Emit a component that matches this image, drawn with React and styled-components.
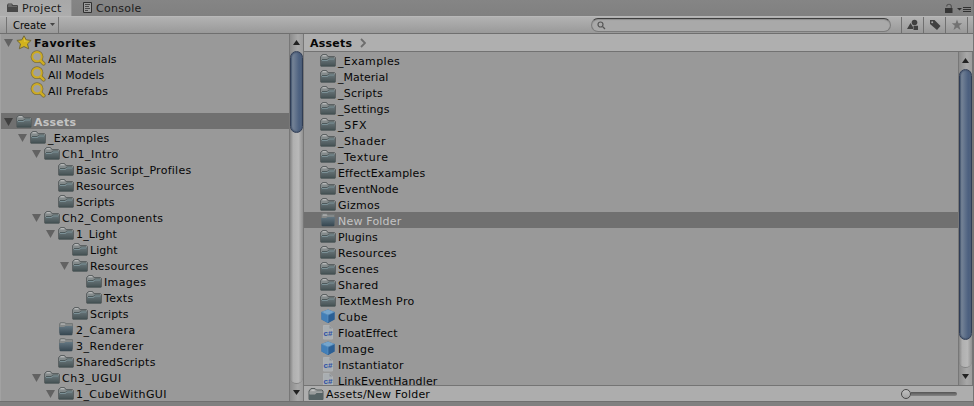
import React from "react";
import styled, { createGlobalStyle, css } from "styled-components";

const Global = createGlobalStyle`
  * { box-sizing: border-box; }
  body { margin: 0; background: #808080; overflow: hidden; }
`;

const Window = styled.div`
  width: 974px;
  height: 406px;
  display: flex;
  flex-direction: column;
  overflow: hidden;
  background: #808080;
  font: 11px/16px "DejaVu Sans", Verdana, sans-serif;
  color: #060606;
  white-space: pre;
  border-right: 1px solid #747474;
`;

const TabBar = styled.div`
  height: 16px;
  flex: none;
  display: flex;
  background: linear-gradient(#858585, #808080);
`;

const Tab = styled.div`
  display: flex;
  align-items: center;
  gap: 4px;
  height: 16px;
  width: ${(p) => p.$width}px;
  padding-left: ${(p) => p.$pad}px;
  color: #1c1c1c;
  letter-spacing: 0.28px;
  ${(p) =>
    p.$active &&
    css`
      background: linear-gradient(#a8a8a8, #adadad);
      border-right: 1px solid #929292;
    `}
`;

const TabLabel = styled.span`
  height: 18px;
  line-height: 16px;
  padding-top: 2px;
`;

const WindowControls = styled.div`
  margin-left: auto;
  padding: 3px 2px 0 0;
  display: flex;
  gap: 4px;
`;

const Toolbar = styled.div`
  height: 18px;
  flex: none;
  display: flex;
  background: linear-gradient(#b2b2b2, #999999);
  border-top: 1px solid #b8b8b8;
  border-bottom: 1px solid #6f6f6f;
`;

const CreateButton = styled.div`
  margin-left: 6px;
  width: 53px;
  display: flex;
  gap: 4px;
  padding: 0 0 0 6px;
  font-size: 10px;
  line-height: 18px;
  border: solid #737373;
  border-width: 0 1px;
  svg { margin-top: 6px; }
`;

const Search = styled.div`
  margin: 1px 10px 0 auto;
  width: 300px;
  height: 14px;
  border-radius: 7px;
  border: 1px solid #7b7b7b;
  border-top-color: #3f3f3f;
  background: #a9a9a9;
  box-shadow: inset 0 1px 1px #8c8c8c;
  padding: 2px 0 0 5px;
  display: flex;
`;

const ToolButton = styled.div`
  width: 22px;
  display: flex;
  align-items: center;
  justify-content: center;
  border-left: 1px solid #707070;
`;

const ToolEnd = styled.div`
  width: 6px;
  border-left: 1px solid #707070;
`;

const Panels = styled.div`
  height: 368px;
  flex: none;
  display: flex;
  background: #999999;
  border-bottom: 1px solid #707070;
`;

const TreePane = styled.div`
  width: 289px;
  overflow: hidden;
  border-left: 1px solid #a2a2a2;
`;

const Row = styled.div`
  height: 16px;
  display: flex;
  align-items: center;
  padding-left: ${(p) => p.$indent}px;
  letter-spacing: ${(p) => p.$spacing || 0}px;
  ${(p) => p.$bold && css`font-weight: bold;`}
  ${(p) =>
    p.$selected &&
    css`
      background: #707070;
      color: #c4c4c4;
    `}
`;

const Gap = styled.div`
  height: 15px;
`;

const IconSlot = styled.span`
  width: ${(p) => p.$w}px;
  height: 16px;
  flex: none;
  svg { display: block; }
`;

const Label = styled.span`
  height: 16px;
  line-height: 16px;
  padding-top: ${(p) => (p.$raised ? 1 : 2)}px;
`;

const Scroll = styled.div`
  width: 15px;
  flex: none;
  display: flex;
  flex-direction: column;
  border: solid #777777;
  border-width: 0 1px;
  background: linear-gradient(90deg, #8c8c8c, #a8a8a8 60%, #9c9c9c);
`;

const Arrow = styled.div`
  height: 17px;
  flex: none;
  display: flex;
  align-items: center;
  justify-content: center;
`;

const Track = styled.div`
  flex: 1;
  border-radius: 7px;
  background: linear-gradient(90deg, #858585, #b0b0b0 25%, #b8b8b8 65%, #909090);
  border-bottom: 1px solid #838383;
`;

const Thumb = styled.div`
  height: ${(p) => p.$size}px;
  border-radius: 7px;
  border: 1px solid #303d55;
  background: linear-gradient(90deg, #778394, #6f7e93 25%, #4c607f 75%, #526482);
  box-shadow: inset 0 0 1px 1px #4c5c75;
`;

const ContentPane = styled.div`
  flex: 1;
  display: flex;
  flex-direction: column;
`;

const Breadcrumb = styled.div`
  height: 18px;
  flex: none;
  display: flex;
  align-items: center;
  gap: 8px;
  padding-left: 6px;
  background: #afafaf;
  border-bottom: 1px solid #727272;
  font-weight: bold;
  letter-spacing: 0.25px;
`;

const Listing = styled.div`
  height: 333px;
  flex: none;
  display: flex;
`;

const Files = styled.div`
  flex: 1;
  overflow: hidden;
`;

const Footer = styled.div`
  height: 16px;
  flex: none;
  display: flex;
  align-items: center;
  padding: 0 16px 0 4px;
  background: #adadad;
  border-top: 1px solid #747474;
  letter-spacing: 0.18px;
`;

const Slider = styled.div`
  margin-left: auto;
  width: 56px;
  height: 10px;
  display: flex;
  align-items: center;
`;

const Knob = styled.div`
  width: 10px;
  height: 10px;
  flex: none;
  border-radius: 50%;
  border: 1px solid #484848;
  background: linear-gradient(#c0c0c0, #a2a2a2);
`;

const Rail = styled.div`
  flex: 1;
  height: 4px;
  border-radius: 0 2px 2px 0;
  background: linear-gradient(#555555, #858585);
`;

const Folder = () => (
  <svg width="16" height="16" viewBox="0 0 16 16">
    <defs>
      <linearGradient id="front" x1="0" y1="0" x2="0" y2="1">
        <stop offset="0" stopColor="#69767a" />
        <stop offset="1" stopColor="#465254" />
      </linearGradient>
    </defs>
    <path d="M.5 14V4.500L2.500 2.500h4l1.500 2h6.500l1 1v8.500z" fill="#818788" stroke="#5c6162" />
    <path d="M2 4.500L3 3h3l1 1.500z" fill="#b5b7b7" />
    <path d="M1 5h14v3H1z" fill="#848b8c" />
    <path d="M1 8h6.500L9 6.500h6v7.500H1z" fill="url(#front)" />
    <path d="M2 7.500h5.200L8.700 6H14" fill="none" stroke="#4d595b" />
    <path d="M2 8.500h5.700L9.200 7H14" fill="none" stroke="#7b9096" />
    <path d="M1 14h14" stroke="#435052" />
  </svg>
);

const EmptyFolder = () => (
  <svg width="16" height="16" viewBox="0 0 16 16">
    <defs>
      <linearGradient id="open" x1="0" y1="0" x2="0" y2="1">
        <stop offset="0" stopColor="#647782" />
        <stop offset="1" stopColor="#35454f" />
      </linearGradient>
    </defs>
    <path d="M1.500 12V3l1-1.500h4L8 2.500h6.500V12z" fill="#858989" stroke="#747878" />
    <path d="M2.500 4L3 2.200h3.500l1 1.800z" fill="#a6a8a8" />
    <path d="M1 6h5L7.500 5H15l-.6 8.500q0 .8-1 .8H2.600q-1 0-1-.8z" fill="url(#open)" />
  </svg>
);

const OutlineFolder = () => (
  <svg width="16" height="16" viewBox="0 0 16 16">
    <path d="M1 13.500V5l2-2.500h4L8.500 4H14l1 1v8.500z" fill="#a0a2a2" stroke="#555b5b" />
    <path d="M3 5l1-1.500h2L7 5z" fill="#c0c2c2" />
    <path d="M1 8.500h6L8.500 7H15v7H1z" fill="#566365" />
    <path d="M1 7h5.500L8 5.500h6" fill="none" stroke="#929999" />
  </svg>
);

const Star = () => (
  <svg width="16" height="16" viewBox="0 0 16 16">
    <path
      d="M8 1.800l2.200 4 4.900.6-3.600 3.500 1.200 4.900L8 12.600l-4.700 2.200 1.200-4.900L.9 6.400l4.900-.6z"
      fill="#d3b31c"
      stroke="#71683b"
      strokeLinejoin="round"
    />
    <path d="M8 3.200l1.300 3.200 3.300.5L8 8z" fill="#dec43d" />
  </svg>
);

const Magnifier = () => (
  <svg width="16" height="16" viewBox="0 0 16 16" fill="none" strokeLinecap="round">
    <circle cx="7" cy="6.700" r="4.700" stroke="#7a6e42" strokeWidth="3.400" />
    <path d="M10.800 10.800l2.800 2.800" stroke="#7a6e42" strokeWidth="4" />
    <circle cx="7" cy="6.700" r="4.700" fill="#a0a09d" stroke="#cdab22" strokeWidth="1.900" />
    <path d="M10.800 10.800l2.800 2.800" stroke="#cfad20" strokeWidth="2.400" />
  </svg>
);

const Cube = () => (
  <svg width="16" height="16" viewBox="0 0 16 16">
    <path d="M8 1.500l6.500 2.500v7.500L8 15l-6.500-3.500V4z" fill="#35679a" />
    <path d="M8 1.500l6.500 2.500L8 7 1.500 4z" fill="#76a5cc" />
    <path d="M1.500 4L8 7v8l-6.500-3.500z" fill="#427fb8" />
    <path d="M8 7l6.500-3v7.500L8 15z" fill="#2c5f94" />
    <path d="M1.500 4L8 7l6.500-3M8 7v7" fill="none" stroke="#6498c5" strokeWidth=".6" />
  </svg>
);

const ScriptText = styled.text`
  font: bold 7px "Liberation Sans", Arial, sans-serif;
  letter-spacing: 0;
`;

const Script = () => (
  <svg width="16" height="16" viewBox="0 0 16 16">
    <path d="M3.500 1.500h6l3 3v10.500h-9z" fill="#a9aeb2" stroke="#aeb1b3" />
    <path d="M9.500 1.500v3h3" fill="#8d9295" />
    <ScriptText x="3.500" y="12" fill="#2d50a5" textLength="9" lengthAdjust="spacingAndGlyphs">c#</ScriptText>
  </svg>
);

const Disclosure = ({ selected }) => (
  <svg width="9" height="16" viewBox="0 0 9 16">
    <path d="M0 5h9L4.500 13z" fill={selected ? "#404040" : "#626262"} />
  </svg>
);

const ICONS = {
  folder: Folder,
  empty: EmptyFolder,
  outline: OutlineFolder,
  star: Star,
  find: Magnifier,
  cube: Cube,
  script: Script,
};

const TreeRow = ({ x, open, icon = "folder", name, bold, selected, spacing }) => {
  const Icon = ICONS[icon];
  return (
    <Row $indent={x - 13} $bold={bold} $selected={selected} $spacing={spacing}>
      <IconSlot $w={12}>{open && <Disclosure selected={selected} />}</IconSlot>
      <IconSlot $w={18}><Icon /></IconSlot>
      <Label>{name}</Label>
    </Row>
  );
};

const FAVORITES = [
  { x: 16, open: true, icon: "star", name: "Favorites", bold: true, spacing: 0.55 },
  { x: 30, icon: "find", name: "All Materials", spacing: 0.08 },
  { x: 30, icon: "find", name: "All Models", spacing: 0.05 },
  { x: 30, icon: "find", name: "All Prefabs", spacing: 0.2 },
];

const TREE = [
  { x: 16, open: true, name: "Assets", bold: true, selected: true, spacing: 0.25 },
  { x: 30, open: true, name: "_Examples", spacing: 0.3 },
  { x: 44, open: true, name: "Ch1_Intro", spacing: 0.45 },
  { x: 58, name: "Basic Script_Profiles", spacing: 0.26 },
  { x: 58, name: "Resources", spacing: 0.25 },
  { x: 58, name: "Scripts", spacing: 0.15 },
  { x: 44, open: true, name: "Ch2_Components", spacing: 0.33 },
  { x: 58, open: true, name: "1_Light", spacing: 0.15 },
  { x: 72, name: "Light" },
  { x: 72, open: true, name: "Resources", spacing: 0.25 },
  { x: 86, name: "Images", spacing: 0.35 },
  { x: 86, name: "Texts", spacing: 0.3 },
  { x: 72, name: "Scripts", spacing: 0.15 },
  { x: 58, icon: "empty", name: "2_Camera", spacing: 0.5 },
  { x: 58, icon: "empty", name: "3_Renderer", spacing: 0.5 },
  { x: 58, name: "SharedScripts", spacing: 0.25 },
  { x: 44, open: true, name: "Ch3_UGUI", spacing: 0.6 },
  { x: 58, open: true, name: "1_CubeWithGUI", spacing: 0.4 },
];

const FILES = [
  { name: "_Examples", spacing: 0.35 },
  { name: "_Material" },
  { name: "_Scripts", spacing: 0.22 },
  { name: "_Settings", spacing: 0.1 },
  { name: "_SFX", spacing: 0.75 },
  { name: "_Shader", spacing: 0.5 },
  { name: "_Texture", spacing: 0.6 },
  { name: "EffectExamples", spacing: 0.15 },
  { name: "EventNode", spacing: 0.05 },
  { name: "Gizmos", spacing: 0.25 },
  { name: "New Folder", icon: "empty", selected: true, spacing: 0.2 },
  { name: "Plugins", spacing: 0.05 },
  { name: "Resources", spacing: 0.3 },
  { name: "Scenes", spacing: 0.3 },
  { name: "Shared", spacing: 0.3 },
  { name: "TextMesh Pro", spacing: 0.38 },
  { name: "Cube", icon: "cube", spacing: 0.4 },
  { name: "FloatEffect", icon: "script", spacing: 0.05 },
  { name: "Image", icon: "cube", spacing: 0.4 },
  { name: "Instantiator", icon: "script", spacing: 0.17 },
  { name: "LinkEventHandler", icon: "script", spacing: 0.13 },
];

const ScrollBar = ({ size }) => (
  <Scroll>
    <Arrow>
      <svg width="7" height="5" viewBox="0 0 7 5"><path d="M0 5h7L3.500 0z" fill="#222" /></svg>
    </Arrow>
    <Track><Thumb $size={size} /></Track>
    <Arrow>
      <svg width="7" height="5" viewBox="0 0 7 5"><path d="M0 0h7L3.500 5z" fill="#222" /></svg>
    </Arrow>
  </Scroll>
);

export default function App() {
  return (
    <>
      <Global />
      <Window>
        <TabBar>
          <Tab $active $width={72} $pad={7}>
            <svg width="11" height="16" viewBox="0 0 11 16">
              <path d="M0 12V5l1-1.500h4L6 5h4.500l.5 1v6z" fill="#484848" />
              <path d="M1 5.500L1.500 4.500h3l.5 1z" fill="#8c8c8c" />
              <path d="M1 6.500h9" stroke="#686868" />
            </svg>
            <TabLabel>Project</TabLabel>
          </Tab>
          <Tab $width={100} $pad={11}>
            <svg width="9" height="16" viewBox="0 0 9 16">
              <path d="M.5 2.500h8v10h-8z" fill="#9b9b9b" stroke="#303030" />
              <path d="M2 4.500h5M2 6.500h4M2 8.500h5M2 10.500h3" stroke="#494949" />
            </svg>
            <TabLabel>Console</TabLabel>
          </Tab>
          <WindowControls>
            <svg width="8" height="11" viewBox="0 0 8 11">
              <path d="M1.700 3.500V3q.5-1.800 2.300-1.800T6.300 3v2" fill="none" stroke="#505050" strokeWidth="1.100" />
              <path d="M0 5h7.500v5H0z" fill="#353535" />
            </svg>
            <svg width="14" height="11" viewBox="0 0 14 11">
              <path d="M0 5h5L2.500 7.500z" fill="#303030" />
              <path d="M6 4.500h8M6 6.500h8M6 8.500h8" stroke="#303030" />
            </svg>
          </WindowControls>
        </TabBar>
        <Toolbar>
          <CreateButton>
            Create
            <svg width="5" height="3" viewBox="0 0 5 3"><path d="M0 0h5L2.500 3z" fill="#444" /></svg>
          </CreateButton>
          <Search>
            <svg width="9" height="10" viewBox="0 0 9 10" fill="none" stroke="#565656">
              <circle cx="3.500" cy="3.500" r="2.500" strokeWidth="1.200" />
              <path d="M5.500 5.500l2.500 2.500" strokeWidth="1.300" />
            </svg>
          </Search>
          <ToolButton>
            <svg width="12" height="12" viewBox="0 0 12 12" fill="#404040">
              <circle cx="7.500" cy="3.500" r="2.800" />
              <path d="M0 10l3.500-6L6 8v2zM6.500 6.700h4.500v4.300H6.500z" />
            </svg>
          </ToolButton>
          <ToolButton>
            <svg width="12" height="12" viewBox="0 0 12 12">
              <path d="M1 1h4.500l6 6L8 11 1 5z" fill="#404040" />
              <circle cx="3.200" cy="3.200" r="1" fill="#a5a5a5" />
            </svg>
          </ToolButton>
          <ToolButton>
            <svg width="12" height="12" viewBox="0 0 12 12">
              <path d="M6 .5l1.400 3.700 3.800.1-3 2.500L9.500 11 6 8.500 2.500 11l1.300-4.200-3-2.500 3.800-.1z" fill="#727272" />
            </svg>
          </ToolButton>
          <ToolEnd />
        </Toolbar>
        <Panels>
          <TreePane>
            {FAVORITES.map((r, i) => <TreeRow key={i} {...r} />)}
            <Gap />
            {TREE.map((r, i) => <TreeRow key={i} {...r} />)}
          </TreePane>
          <ScrollBar size={82} />
          <ContentPane>
            <Breadcrumb>
              <Label $raised>Assets</Label>
              <svg width="6" height="10" viewBox="0 0 6 10"><path d="M1 1l4 4-4 4" fill="none" stroke="#6c6c6c" strokeWidth="1.800" /></svg>
            </Breadcrumb>
            <Listing>
              <Files>
                {FILES.map((f) => {
                  const Icon = ICONS[f.icon || "folder"];
                  return (
                    <Row key={f.name} $indent={16} $selected={f.selected} $spacing={f.spacing}>
                      <IconSlot $w={18}><Icon /></IconSlot>
                      <Label>{f.name}</Label>
                    </Row>
                  );
                })}
              </Files>
              <ScrollBar size={271} />
            </Listing>
            <Footer>
              <IconSlot $w={18}><OutlineFolder /></IconSlot>
              <Label $raised>Assets/New Folder</Label>
              <Slider><Knob /><Rail /></Slider>
            </Footer>
          </ContentPane>
        </Panels>
      </Window>
    </>
  );
}
